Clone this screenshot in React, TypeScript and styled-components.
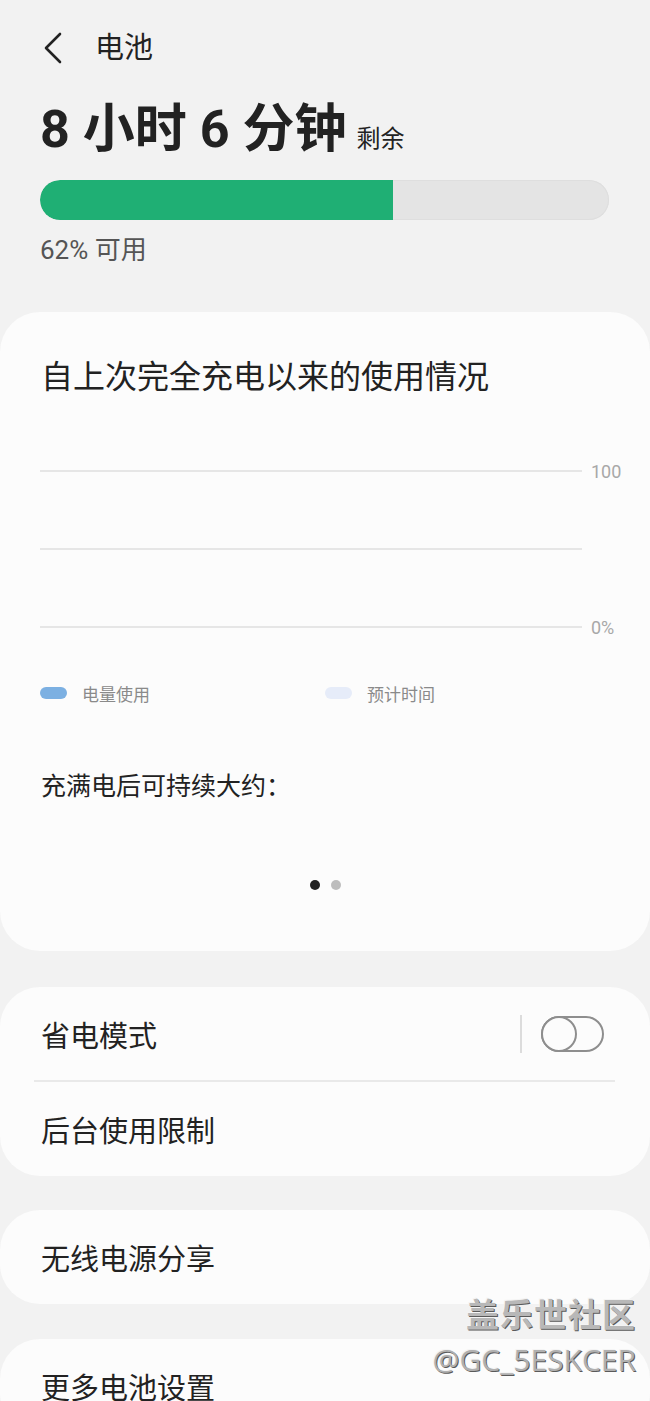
import React from 'react'
import styled, { createGlobalStyle } from 'styled-components'

const GlobalStyle = createGlobalStyle`
    html, body {
        margin: 0;
        padding: 0;
        background: #f2f2f2;
        overflow: hidden;
    }
    body {
        font-family: Roboto, "Noto Sans CJK SC", "Noto Sans", sans-serif;
        color: #1f1f1f;
    }
`

const Page = styled.div`
    position: relative;
    width: 650px;
    height: 1401px;
    overflow: hidden;
    background: #f2f2f2;
`

const Header = styled.div`
    display: flex;
    align-items: center;
    height: 96px;
    padding-left: 40px;
`

const BackButton = styled.div`
    width: 28px;
    height: 34px;
    display: flex;
    align-items: center;
    justify-content: flex-start;
    margin-right: 29px;
    padding-left: 3px;
`

const HeaderTitle = styled.div`
    font-size: 29px;
    line-height: 36px;
    color: #222;
    margin-left: -5px;
`

const Summary = styled.div`
    padding: 0 41px 0 40px;
`

const Remaining = styled.div`
    display: flex;
    align-items: baseline;
    margin-top: 4px;
    height: 60px;
    font-size: 52px;
    line-height: 60px;
    font-weight: 700;
    color: #222;
    white-space: pre;
`

const RemainingSuffix = styled.span`
    font-size: 24px;
    font-weight: 400;
    margin-left: 10px;
`

const Track = styled.div`
    margin-top: 20px;
    height: 40px;
    border-radius: 20px;
    background: #e4e4e4;
    box-shadow: inset 0 0 0 1px #dedede;
    overflow: hidden;
`

const Fill = styled.div`
    height: 100%;
    background: #1faf74;
    border-radius: 20px 0 0 20px;
`

const Available = styled.div`
    margin-top: 15px;
    font-size: 26px;
    line-height: 30px;
    color: #555;
`

const Card = styled.div<{ $top: number }>`
    margin-top: ${(p) => p.$top}px;
    background: #fcfcfc;
    border-radius: 40px;
`

const UsageCard = styled(Card)`
    padding: 45px 40px 61px 40px;
`

const CardTitle = styled.div`
    font-size: 32px;
    line-height: 40px;
    color: #222;
    padding-left: 1px;
`

const Chart = styled.div`
    margin-top: 64px;
    display: flex;
    flex-direction: column;
    gap: 58px;
`

const GridRow = styled.div`
    display: flex;
    align-items: center;
    height: 20px;
`

const GridLine = styled.div`
    flex-shrink: 0;
    width: 542px;
    height: 2px;
    background: #e6e6e6;
`

const AxisLabel = styled.span`
    flex-shrink: 0;
    margin-left: 9px;
    font-size: 18px;
    color: #a8a8a8;
    white-space: nowrap;
`

const Legend = styled.div`
    margin-top: 44px;
    display: grid;
    grid-template-columns: 285px 1fr;
`

const LegendItem = styled.div`
    display: flex;
    align-items: center;
    height: 24px;
    font-size: 17px;
    color: #8a8a8a;
`

const Swatch = styled.span<{ $color: string }>`
    width: 27px;
    height: 12px;
    border-radius: 6px;
    background: ${(p) => p.$color};
    margin-right: 15px;
`

const FullCharge = styled.div`
    margin-top: 67px;
    font-size: 25px;
    line-height: 30px;
    color: #222;
    padding-left: 1px;
`

const Dots = styled.div`
    margin-top: 78px;
    display: flex;
    justify-content: center;
    gap: 11px;
`

const Dot = styled.span<{ $active?: boolean }>`
    width: 10px;
    height: 10px;
    border-radius: 50%;
    background: ${(p) => (p.$active ? '#222' : '#bdbdbd')};
`

const Row = styled.div`
    display: flex;
    align-items: center;
    height: 94px;
    padding: 0 46px 0 41px;
    font-size: 29px;
    color: #222;
`

const RowLabel = styled.span`
    flex: 1;
    white-space: nowrap;
`

const Divider = styled.div`
    height: 2px;
    margin: -1px 35px 0 34px;
    background: #e9e9e9;
`

const VerticalBar = styled.div`
    width: 2px;
    height: 38px;
    background: #dcdcdc;
    margin-right: 19px;
`

const Switch = styled.div`
    position: relative;
    width: 63px;
    height: 36px;
    box-sizing: border-box;
    border: 2px solid #8e8e8e;
    border-radius: 18px;
`

const Knob = styled.div`
    position: absolute;
    left: -2px;
    top: -2px;
    width: 36px;
    height: 36px;
    box-sizing: border-box;
    border: 2px solid #8e8e8e;
    border-radius: 50%;
    background: #fcfcfc;
`

const Watermark = styled.div`
    position: absolute;
    right: 14px;
    top: 1294px;
    display: flex;
    flex-direction: column;
    align-items: flex-end;
    text-shadow: 1px 1px 0 #5a5a5a, -1px -1px 0 #f4f4f4;
    pointer-events: none;
`

const WatermarkTitle = styled.div`
    font-size: 33px;
    line-height: 44px;
    font-weight: 700;
    letter-spacing: 1px;
    color: #b8b8b8;
`

const WatermarkHandle = styled.div`
    font-size: 30px;
    line-height: 36px;
    margin-top: 4px;
    color: #b0b0b0;
    font-family: "Open Sans", "DejaVu Sans", sans-serif;
`

const ChevronLeft = () => (
    <svg width="20" height="32" viewBox="0 0 20 32">
        <path
            d="M17 2 L3 16 L17 30"
            fill="none"
            stroke="#222"
            strokeWidth="2.6"
            strokeLinecap="round"
            strokeLinejoin="round"
        />
    </svg>
)

const percent = 62

export default function App() {
    return (
        <Page>
            <GlobalStyle />
            <Header>
                <BackButton>
                    <ChevronLeft />
                </BackButton>
                <HeaderTitle>电池</HeaderTitle>
            </Header>
            <Summary>
                <Remaining>
                    8 小时 6 分钟<RemainingSuffix>剩余</RemainingSuffix>
                </Remaining>
                <Track>
                    <Fill style={{ width: `${percent}%` }} />
                </Track>
                <Available>{percent}% 可用</Available>
            </Summary>
            <UsageCard $top={47}>
                <CardTitle>自上次完全充电以来的使用情况</CardTitle>
                <Chart>
                    <GridRow>
                        <GridLine />
                        <AxisLabel>100</AxisLabel>
                    </GridRow>
                    <GridRow>
                        <GridLine />
                    </GridRow>
                    <GridRow>
                        <GridLine />
                        <AxisLabel>0%</AxisLabel>
                    </GridRow>
                </Chart>
                <Legend>
                    <LegendItem>
                        <Swatch $color="#7cb0e2" />
                        电量使用
                    </LegendItem>
                    <LegendItem>
                        <Swatch $color="#e6ecf9" />
                        预计时间
                    </LegendItem>
                </Legend>
                <FullCharge>充满电后可持续大约：</FullCharge>
                <Dots>
                    <Dot $active />
                    <Dot />
                </Dots>
            </UsageCard>
            <Card $top={36}>
                <Row>
                    <RowLabel>省电模式</RowLabel>
                    <VerticalBar />
                    <Switch>
                        <Knob />
                    </Switch>
                </Row>
                <Divider />
                <Row>
                    <RowLabel>后台使用限制</RowLabel>
                </Row>
            </Card>
            <Card $top={34}>
                <Row>
                    <RowLabel>无线电源分享</RowLabel>
                </Row>
            </Card>
            <Card $top={35}>
                <Row>
                    <RowLabel>更多电池设置</RowLabel>
                </Row>
            </Card>
            <Watermark>
                <WatermarkTitle>盖乐世社区</WatermarkTitle>
                <WatermarkHandle>@GC_5ESKCER</WatermarkHandle>
            </Watermark>
        </Page>
    )
}
